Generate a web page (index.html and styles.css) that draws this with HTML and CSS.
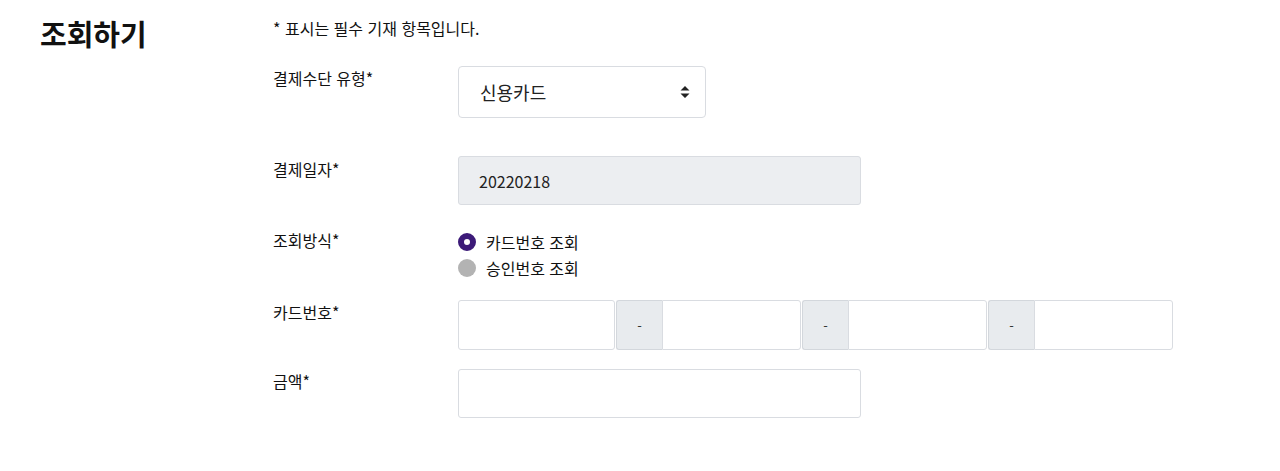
FILE: index.html
```html
<!DOCTYPE html>
<html lang="ko">
<head>
<meta charset="utf-8">
<link rel="stylesheet" href="styles.css">
</head>
<body>
<div class="page">
  <h1 class="title">조회하기</h1>
  <div class="form">
    <p class="notice">* 표시는 필수 기재 항목입니다.</p>
    <div class="row row-select">
      <div class="label">결제수단 유형*</div>
      <div class="control">
        <div class="select">
          <span>신용카드</span>
          <svg class="caret" width="10" height="14" viewBox="0 0 10 14"><path d="M5 1 L9.5 5.5 H0.5 Z M5 13 L9.5 8.5 H0.5 Z" fill="#222"/></svg>
        </div>
      </div>
    </div>
    <div class="row row-date">
      <div class="label">결제일자*</div>
      <div class="control">
        <div class="input wide readonly">20220218</div>
      </div>
    </div>
    <div class="row row-radio">
      <div class="label">조회방식*</div>
      <div class="control radios">
        <div class="radio"><span class="dot checked"></span><span>카드번호 조회</span></div>
        <div class="radio"><span class="dot"></span><span>승인번호 조회</span></div>
      </div>
    </div>
    <div class="row row-card">
      <div class="label">카드번호*</div>
      <div class="control card">
        <div class="input seg first"></div>
        <div class="addon">-</div>
        <div class="input seg"></div>
        <div class="addon">-</div>
        <div class="input seg"></div>
        <div class="addon">-</div>
        <div class="input seg"></div>
      </div>
    </div>
    <div class="row row-amount">
      <div class="label">금액*</div>
      <div class="control">
        <div class="input wide"></div>
      </div>
    </div>
  </div>
</div>
</body>
</html>
```
FILE: styles.css
```css
* { box-sizing: border-box; }
html, body { margin: 0; padding: 0; background: #fff; }
body {
  font-family: "Noto Sans CJK KR", "Noto Sans", sans-serif;
  color: #111;
  font-size: 16px;
}
.page {
  display: flex;
  padding: 0 0 0 40px;
}
.title {
  margin: 13px 0 0 0;
  width: 233px;
  font-size: 29px;
  font-weight: 700;
  line-height: 40px;
}
.form {
  display: flex;
  flex-direction: column;
  padding-top: 16px;
}
.notice {
  margin: 0;
  font-size: 16px;
  line-height: 24px;
}
.row {
  display: flex;
  align-items: flex-start;
}
.label {
  width: 185px;
  font-size: 16px;
  line-height: 24px;
}
.row-select { margin-top: 26px; }
.row-date { margin-top: 38px; }
.row-date .label { margin-top: 1px; }
.row-radio { margin-top: 26px; }
.row-radio .label { margin-top: -3px; }
.row-card { margin-top: 21px; }
.row-amount { margin-top: 19px; }
.select {
  width: 248px;
  height: 52px;
  border: 1px solid #d9dce1;
  border-radius: 4px;
  display: flex;
  align-items: center;
  justify-content: space-between;
  padding: 0 15px 0 21px;
  font-size: 18px;
  color: #222;
}
.caret { display: block; }
.input {
  height: 49px;
  border: 1px solid #d9dce1;
  border-radius: 3px;
  background: #fff;
  display: flex;
  align-items: center;
  padding: 0 20px;
  font-size: 16px;
  color: #222;
}
.wide { width: 403px; }
.readonly { background: #eceef1; }
.radios {
  display: flex;
  flex-direction: column;
  gap: 4px;
}
.radio {
  display: flex;
  align-items: center;
  gap: 10px;
  height: 22px;
  font-size: 16px;
}
.dot {
  width: 18px;
  height: 18px;
  border-radius: 50%;
  background: #b3b3b3;
  flex: none;
}
.dot.checked {
  background: #fff;
  border: 6px solid #3c1a78;
}
.card {
  display: flex;
  height: 50px;
}
.card .input { height: 50px; }
.seg { width: 139px; border-radius: 0 3px 3px 0; }
.seg.first { width: 157px; border-radius: 3px; }
.addon {
  width: 46px;
  height: 50px;
  margin-left: 1px;
  background: #e8ebee;
  border: 1px solid #d3d7dc;
  border-right: none;
  border-radius: 3px 0 0 3px;
  display: flex;
  align-items: center;
  justify-content: center;
  font-size: 13px;
  color: #333;
}
```
